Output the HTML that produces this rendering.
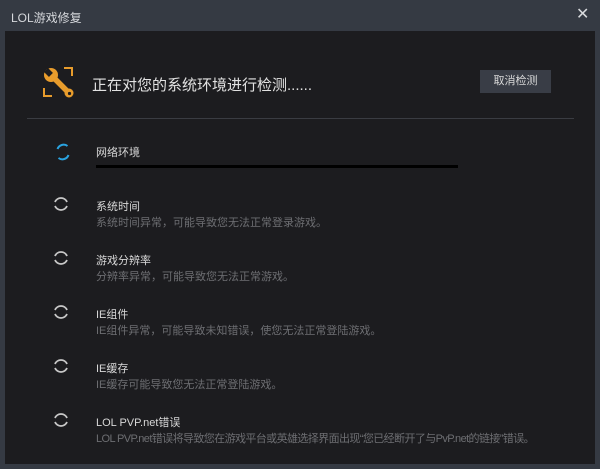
<!DOCTYPE html>
<html><head><meta charset="utf-8"><style>
*{margin:0;padding:0;box-sizing:border-box}
body{width:600px;height:469px;background:#353a43;font-family:"Liberation Sans","Noto Sans CJK SC",sans-serif;position:relative;overflow:hidden}
.title{position:absolute;left:11px;top:9px;font-size:12px;color:#d6d8dc}
.close{position:absolute;left:576px;top:4px;font-size:16px;color:#d8dadd}
.main{position:absolute;left:5px;top:31px;width:590px;height:433px;background:#1c1c1f}
.head{position:absolute;left:92px;top:74px;font-size:15px;color:#e2e2e2}
.btn{position:absolute;left:480px;top:70px;width:71px;height:23px;background:#393d46;color:#d8d8d8;font-size:11px;text-align:center;line-height:23px}
.line{position:absolute;left:27px;top:118px;width:547px;height:1px;background:#3a3c42}
.it{position:absolute;left:96px;font-size:11px;color:#d8d8d8}
.ds{position:absolute;left:96px;font-size:11px;color:#6d6e72}
svg.sp{position:absolute}
</style></head><body>
<div class="title">LOL游戏修复</div>
<div class="close">✕</div>
<div class="main"></div>
<svg style="position:absolute;left:40px;top:64px" width="38" height="38" viewBox="0 0 38 38">
<path d="M24 4H32V12" fill="none" stroke="#e89c2c" stroke-width="2"/>
<path d="M4 24V32H12" fill="none" stroke="#e89c2c" stroke-width="2"/>
<circle cx="11" cy="11" r="7" fill="#e89c2c"/>
<path d="M4 8 L8 4 L13 9 L9 13 Z" fill="#1c1c1f"/>
<line x1="11" y1="11" x2="29" y2="29" stroke="#e89c2c" stroke-width="5.5"/>
<circle cx="29" cy="29" r="4.5" fill="#e89c2c"/>
<circle cx="29.5" cy="29.5" r="1.6" fill="#1c1c1f"/>
</svg>
<div class="head">正在对您的系统环境进行检测......</div>
<div class="btn">取消检测</div>
<div class="line"></div>
<svg class="sp" style="left:54px;top:143px" width="18" height="18" viewBox="0 0 18 18"><path d="M3.5 6 A6.5 6.5 0 0 1 13.5 3 M14.5 12 A6.5 6.5 0 0 1 4.5 15" fill="none" stroke="#2aa3e0" stroke-width="2"/></svg>
<div class="it" style="top:144px">网络环境</div>
<div style="position:absolute;left:96px;top:165px;width:362px;height:3px;background:#000"></div>
<div class="it" style="top:198px">系统时间</div><div class="ds" style="top:214px">系统时间异常，可能导致您无法正常登录游戏。</div>
<div class="it" style="top:252px">游戏分辨率</div><div class="ds" style="top:268px">分辨率异常，可能导致您无法正常游戏。</div>
<div class="it" style="top:306px">IE组件</div><div class="ds" style="top:322px">IE组件异常，可能导致未知错误，使您无法正常登陆游戏。</div>
<div class="it" style="top:360px">IE缓存</div><div class="ds" style="top:376px">IE缓存可能导致您无法正常登陆游戏。</div>
<div class="it" style="top:414px">LOL PVP.net错误</div><div class="ds" style="top:430px;letter-spacing:-0.6px">LOL PVP.net错误将导致您在游戏平台或英雄选择界面出现“您已经断开了与PvP.net的链接”错误。</div>
<svg class="sp" style="left:52px;top:195px" width="18" height="18" viewBox="0 0 18 18"><path d="M3 7 A6.5 6.5 0 0 1 15 7 M15 11 A6.5 6.5 0 0 1 3 11" fill="none" stroke="#c8c8c8" stroke-width="1.8"/></svg>
<svg class="sp" style="left:52px;top:249px" width="18" height="18" viewBox="0 0 18 18"><path d="M3 7 A6.5 6.5 0 0 1 15 7 M15 11 A6.5 6.5 0 0 1 3 11" fill="none" stroke="#c8c8c8" stroke-width="1.8"/></svg>
<svg class="sp" style="left:52px;top:303px" width="18" height="18" viewBox="0 0 18 18"><path d="M3 7 A6.5 6.5 0 0 1 15 7 M15 11 A6.5 6.5 0 0 1 3 11" fill="none" stroke="#c8c8c8" stroke-width="1.8"/></svg>
<svg class="sp" style="left:52px;top:357px" width="18" height="18" viewBox="0 0 18 18"><path d="M3 7 A6.5 6.5 0 0 1 15 7 M15 11 A6.5 6.5 0 0 1 3 11" fill="none" stroke="#c8c8c8" stroke-width="1.8"/></svg>
<svg class="sp" style="left:52px;top:411px" width="18" height="18" viewBox="0 0 18 18"><path d="M3 7 A6.5 6.5 0 0 1 15 7 M15 11 A6.5 6.5 0 0 1 3 11" fill="none" stroke="#c8c8c8" stroke-width="1.8"/></svg>
</body></html>
